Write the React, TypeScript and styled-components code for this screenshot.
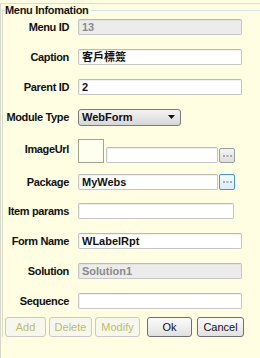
import styled, { createGlobalStyle } from 'styled-components';

const GlobalStyle = createGlobalStyle`
  html, body {
    margin: 0;
    padding: 0;
    background: #fffee2;
  }
  body {
    font-family: "Liberation Sans", Arial, sans-serif;
  }
`;

const Page = styled.div`
  width: 260px;
  height: 358px;
  overflow: hidden;
  box-sizing: border-box;
  padding-top: 3px;
  background: #fffee2;
`;

const Window = styled.div`
  height: 100%;
  border-top: 1px solid #dcdcd2;
  border-left: 1px solid #d8d8ca;
`;

const Group = styled.fieldset`
  margin: 0 0 0 1px;
  padding: 0 0 0 2px;
  min-width: 0;
  border: none;
  border-top: 1px solid #d2e4ee;
  border-left: 1px solid #dadacb;
`;

const Legend = styled.legend`
  padding: 0 2px 0 0;
  font-size: 11px;
  line-height: 12px;
  font-weight: bold;
  letter-spacing: -0.3px;
  color: #151515;
`;

const Form = styled.div`
  margin-top: -4px;
  display: flex;
  flex-direction: column;
`;

const Row = styled.div<{ $h: number; $top?: boolean }>`
  display: grid;
  grid-template-columns: 64px auto;
  column-gap: 9px;
  height: ${(p) => p.$h}px;
  align-items: ${(p) => (p.$top ? 'start' : 'center')};
`;

const Label = styled.label<{ $offset?: number }>`
  text-align: right;
  font-size: 11px;
  font-weight: bold;
  letter-spacing: -0.35px;
  color: #111;
  white-space: nowrap;
  margin-top: ${(p) => p.$offset ?? 0}px;
`;

const Input = styled.div<{ $w: number; $disabled?: boolean }>`
  box-sizing: border-box;
  width: ${(p) => p.$w}px;
  height: 16px;
  padding: 0 3px;
  border: 1px solid #c6c6c6;
  border-top-color: #b9b9b9;
  border-radius: 2px;
  background: ${(p) => (p.$disabled ? '#ececec' : '#ffffff')};
  box-shadow: inset 1px 1px 0 ${(p) => (p.$disabled ? '#e2e2e2' : '#f1f1f1')};
  font-size: 11px;
  line-height: 14px;
  font-weight: bold;
  color: ${(p) => (p.$disabled ? '#8a8a8a' : '#111')};
  font-family: "Liberation Sans", "Noto Sans CJK TC", sans-serif;
  white-space: nowrap;
  overflow: hidden;
`;

const Select = styled.div`
  box-sizing: border-box;
  width: 103px;
  height: 17px;
  padding: 0 5px 0 3px;
  display: flex;
  align-items: center;
  justify-content: space-between;
  border: 1px solid #7b7b7b;
  border-radius: 3px;
  background: linear-gradient(#f3f3f3, #e6e6e6 50%, #d6d6d6);
  font-size: 11px;
  font-weight: bold;
  color: #111;
`;

const FieldLine = styled.div`
  display: flex;
  align-items: flex-end;
`;

const ImageBox = styled.div`
  box-sizing: border-box;
  width: 26px;
  height: 24px;
  margin-top: 7px;
  margin-right: 2px;
  border: 1px solid #a3a394;
  background: #fffff0;
`;

const DotButton = styled.div<{ $focus?: boolean }>`
  box-sizing: border-box;
  width: 16px;
  height: ${(p) => (p.$focus ? 16 : 15)}px;
  margin-left: 1px;
  display: flex;
  align-items: center;
  justify-content: center;
  border: 1px solid ${(p) => (p.$focus ? '#3c9bd7' : '#9d9d9d')};
  border-radius: 2px;
  background: ${(p) =>
    p.$focus ? 'linear-gradient(#f4fafe, #dcebf6)' : 'linear-gradient(#f4f4f4, #dedede)'};
`;

const Buttons = styled.div`
  display: flex;
  margin-top: 1px;
`;

const Button = styled.button<{ $w: number; $gap?: number; $disabled?: boolean }>`
  box-sizing: border-box;
  width: ${(p) => p.$w}px;
  height: 20px;
  margin: 0 0 0 ${(p) => p.$gap ?? 0}px;
  padding: 0;
  border: 1px solid ${(p) => (p.$disabled ? '#cacac0' : '#707070')};
  border-radius: 3px;
  background: ${(p) =>
    p.$disabled ? '#f7f7ee' : 'linear-gradient(#fbfbfb, #efefef 50%, #e0e0e0)'};
  font-family: "Liberation Sans", Arial, sans-serif;
  font-size: 11px;
  color: ${(p) => (p.$disabled ? '#bdbd6a' : '#111')};
`;

const Dots = ({ color }: { color: string }) => (
  <svg width="9" height="3" viewBox="0 0 9 3">
    <rect x="0" y="1" width="2" height="2" fill={color} />
    <rect x="3.5" y="1" width="2" height="2" fill={color} />
    <rect x="7" y="1" width="2" height="2" fill={color} />
  </svg>
);

const Arrow = () => (
  <svg width="7" height="4" viewBox="0 0 7 4">
    <polygon points="0,0 7,0 3.5,4" fill="#111" />
  </svg>
);

export default function App() {
  return (
    <Page>
      <GlobalStyle />
      <Window>
        <Group>
          <Legend>Menu Infomation</Legend>
          <Form>
            <Row $h={30}>
              <Label>Menu ID</Label>
              <Input $w={164} $disabled>13</Input>
            </Row>
            <Row $h={30}>
              <Label>Caption</Label>
              <Input $w={164}>客戶標簽</Input>
            </Row>
            <Row $h={30}>
              <Label>Parent ID</Label>
              <Input $w={164}>2</Input>
            </Row>
            <Row $h={30}>
              <Label>Module Type</Label>
              <Select>
                WebForm
                <Arrow />
              </Select>
            </Row>
            <Row $h={35} $top>
              <Label $offset={11}>ImageUrl</Label>
              <FieldLine>
                <ImageBox />
                <Input $w={112}></Input>
                <DotButton>
                  <Dots color="#a8a8a8" />
                </DotButton>
              </FieldLine>
            </Row>
            <Row $h={29}>
              <Label>Package</Label>
              <FieldLine>
                <Input $w={140}>MyWebs</Input>
                <DotButton $focus>
                  <Dots color="#9fb0bd" />
                </DotButton>
              </FieldLine>
            </Row>
            <Row $h={30}>
              <Label>Item params</Label>
              <Input $w={156}></Input>
            </Row>
            <Row $h={30}>
              <Label>Form Name</Label>
              <Input $w={164}>WLabelRpt</Input>
            </Row>
            <Row $h={30}>
              <Label>Solution</Label>
              <Input $w={164} $disabled>Solution1</Input>
            </Row>
            <Row $h={30}>
              <Label>Sequence</Label>
              <Input $w={164}></Input>
            </Row>
            <Buttons>
              <Button $w={41} $disabled>Add</Button>
              <Button $w={43} $gap={3} $disabled>Delete</Button>
              <Button $w={45} $gap={3} $disabled>Modify</Button>
              <Button $w={45} $gap={7}>Ok</Button>
              <Button $w={47} $gap={5}>Cancel</Button>
            </Buttons>
          </Form>
        </Group>
      </Window>
    </Page>
  );
}
